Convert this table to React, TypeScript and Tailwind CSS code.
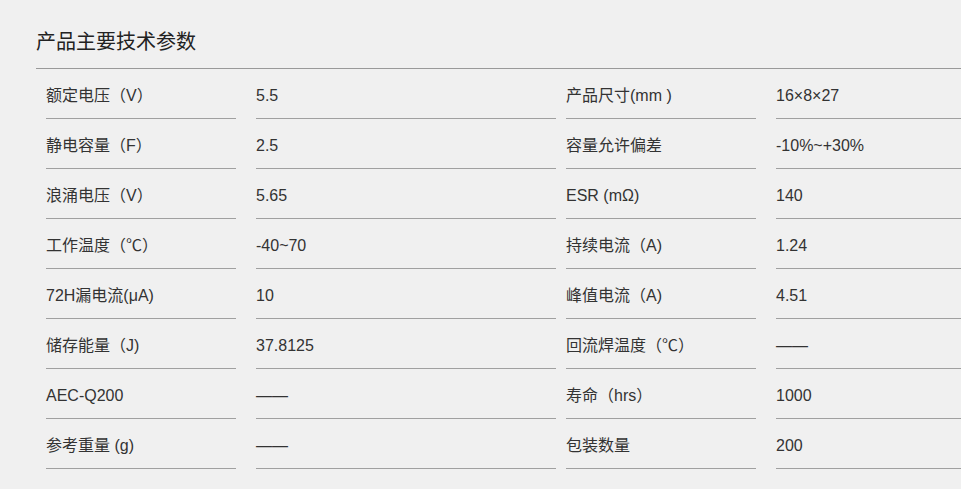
import React from "react";

type Param = { label: string; value: string };

const rows: [Param, Param][] = [
  [{ label: "额定电压（V）", value: "5.5" }, { label: "产品尺寸(mm )", value: "16×8×27" }],
  [{ label: "静电容量（F）", value: "2.5" }, { label: "容量允许偏差", value: "-10%~+30%" }],
  [{ label: "浪涌电压（V）", value: "5.65" }, { label: "ESR (mΩ)", value: "140" }],
  [{ label: "工作温度（℃）", value: "-40~70" }, { label: "持续电流（A)", value: "1.24" }],
  [{ label: "72H漏电流(μA)", value: "10" }, { label: "峰值电流（A)", value: "4.51" }],
  [{ label: "储存能量（J)", value: "37.8125" }, { label: "回流焊温度（℃）", value: "——" }],
  [{ label: "AEC-Q200", value: "——" }, { label: "寿命（hrs）", value: "1000" }],
  [{ label: "参考重量 (g)", value: "——" }, { label: "包装数量", value: "200" }],
];

const cell = "h-[50px] shrink-0 border-b border-[#a0a0a0] pt-[17px] leading-[20px]";

export default function App() {
  return (
    <div
      className="min-h-[489px] w-full overflow-hidden bg-[#f0f0f0] text-[#333] text-[16px]"
      style={{ fontFamily: '"Liberation Sans", Arial, "Noto Sans CJK SC", sans-serif' }}
    >
      <div className="pl-[36px] pt-[29px]">
        <h2 className="text-[20px] leading-[26px] text-[#222] pb-[13px]">产品主要技术参数</h2>
        <div className="border-t border-[#999] w-[1100px]">
          {rows.map(([a, b], i) => (
            <div key={i} className="flex">
              <div className={`${cell} ml-[10px] w-[190px]`}>{a.label}</div>
              <div className={`${cell} ml-[20px] w-[300px]`}>{a.value}</div>
              <div className={`${cell} ml-[10px] w-[190px]`}>{b.label}</div>
              <div className={`${cell} ml-[20px] w-[300px]`}>{b.value}</div>
            </div>
          ))}
        </div>
      </div>
    </div>
  );
}
